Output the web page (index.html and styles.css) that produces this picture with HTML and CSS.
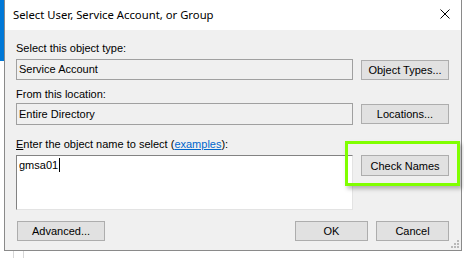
FILE: index.html
```html
<!DOCTYPE html>
<html lang="en">
<head>
  <meta charset="UTF-8" />
  <title>Select User, Service Account, or Group</title>
  <link rel="stylesheet" href="styles.css">
</head>
<body>

  <div class="desktop">
    <div class="app-strip"></div>

    <div class="dialog">
      <div class="titlebar">
        <span class="title">Select User, Service Account, or Group</span>
        <svg class="close" width="10" height="10" viewBox="0 0 10 10">
          <path d="M0.5 0.5 L9.5 9.5 M9.5 0.5 L0.5 9.5" stroke="#000" stroke-width="1" fill="none"/>
        </svg>
      </div>

      <div class="content">
        <div class="label first">Select this object type:</div>
        <div class="row">
          <div class="field">Service Account</div>
          <button class="btn">Object Types...</button>
        </div>

        <div class="label second">From this location:</div>
        <div class="row">
          <div class="field tall">Entire Directory</div>
          <button class="btn">Locations...</button>
        </div>

        <div class="label third"><u>E</u>nter the object name to select (<a href="#">examples</a>):</div>
        <div class="row">
          <div class="names">gmsa01<span class="caret"></span></div>
          <button class="btn check">Check Names</button>
        </div>

        <div class="footer">
          <button class="btn advanced">Advanced...</button>
          <div class="footer-right">
            <button class="btn small">OK</button>
            <button class="btn small">Cancel</button>
          </div>
        </div>
      </div>

      <div class="highlight"></div>

      <svg class="grip" width="9" height="9" viewBox="0 0 9 9">
        <rect x="6" y="0" width="2" height="2" fill="#b8b8b8"/>
        <rect x="3" y="3" width="2" height="2" fill="#b8b8b8"/>
        <rect x="6" y="3" width="2" height="2" fill="#b8b8b8"/>
        <rect x="0" y="6" width="2" height="2" fill="#b8b8b8"/>
        <rect x="3" y="6" width="2" height="2" fill="#b8b8b8"/>
        <rect x="6" y="6" width="2" height="2" fill="#b8b8b8"/>
      </svg>
    </div>

    <div class="below">
      <span class="vline"></span>
      <span class="vline"></span>
    </div>
  </div>

</body>
</html>
```

FILE: styles.css
```css
body {
  margin: 0;
  padding: 0;
  background-color: #fff;
  font-family: 'Liberation Sans', Arial, sans-serif;
  overflow: hidden;
}

.desktop {
  position: relative;
  width: 464px;
  height: 258px;
  overflow: hidden;
}

.app-strip {
  position: absolute;
  left: 0;
  top: 0;
  width: 4px;
  height: 61px;
  background-color: #0078d7;
}

.dialog {
  position: relative;
  margin-left: 4px;
  width: 456px;
  border: 1px solid #8a8a8a;
  border-top: none;
  background-color: #f0f0f0;
}

.titlebar {
  height: 30px;
  background-color: #fff;
  display: flex;
  align-items: center;
  justify-content: space-between;
  padding: 0 11px 0 8px;
}

.title {
  font-family: 'Noto Sans', 'Open Sans', sans-serif;
  font-size: 11.3px;
  color: #000;
  padding-bottom: 1px;
}

.close {
  margin-top: -2px;
}

.content {
  padding: 0 12px 9px 11px;
}

.label {
  font-size: 11px;
  line-height: 14px;
  height: 14px;
  color: #000;
}

.label.first { padding-top: 11px; margin-bottom: 4px; }
.label.second { margin-top: 7px; margin-bottom: 2px; }
.label.third { margin-top: 12px; margin-bottom: 4px; }

.label a {
  color: #0066cc;
}

.row {
  display: flex;
  align-items: flex-start;
  gap: 8px;
}

.field {
  box-sizing: border-box;
  width: 337px;
  height: 21px;
  border: 1px solid #a0a0a0;
  background-color: #f0f0f0;
  font-size: 11px;
  line-height: 19px;
  padding-left: 2px;
}

.field.tall {
  height: 22px;
  line-height: 20px;
}

.names {
  box-sizing: border-box;
  width: 337px;
  height: 55px;
  background-color: #fff;
  border-top: 1px solid #828282;
  border-left: 1px solid #828282;
  border-right: 1px solid #e3e3e3;
  border-bottom: 1px solid #e3e3e3;
  font-size: 11px;
  line-height: 14px;
  padding: 2px 0 0 2px;
}

.caret {
  display: inline-block;
  width: 1px;
  height: 14px;
  background-color: #000;
  vertical-align: -3px;
  margin-left: 1px;
}

.btn {
  box-sizing: border-box;
  width: 88px;
  height: 20px;
  margin-top: 1px;
  padding: 0;
  background-color: #e1e1e1;
  border: 1px solid #adadad;
  font-family: 'Liberation Sans', Arial, sans-serif;
  font-size: 11px;
  color: #000;
  text-align: center;
}

.btn.check {
  height: 21px;
  margin-top: 0;
}

.footer {
  display: flex;
  justify-content: space-between;
  margin-top: 11px;
}

.btn.advanced {
  margin-left: 1px;
  margin-top: 0;
}

.footer-right {
  display: flex;
  gap: 8px;
}

.btn.small {
  width: 73px;
  margin-top: 0;
}

.highlight {
  position: absolute;
  left: 340px;
  top: 141px;
  width: 109px;
  height: 39px;
  border: 3px solid #80ff00;
  box-shadow: 2px 3px 4px rgba(0, 0, 0, 0.25);
}

.grip {
  position: absolute;
  right: 1px;
  bottom: 1px;
}

.below {
  display: flex;
  gap: 9px;
  padding-left: 13px;
  height: 8px;
}

.vline {
  width: 1px;
  height: 8px;
  background-color: #d8d8d8;
}
```
